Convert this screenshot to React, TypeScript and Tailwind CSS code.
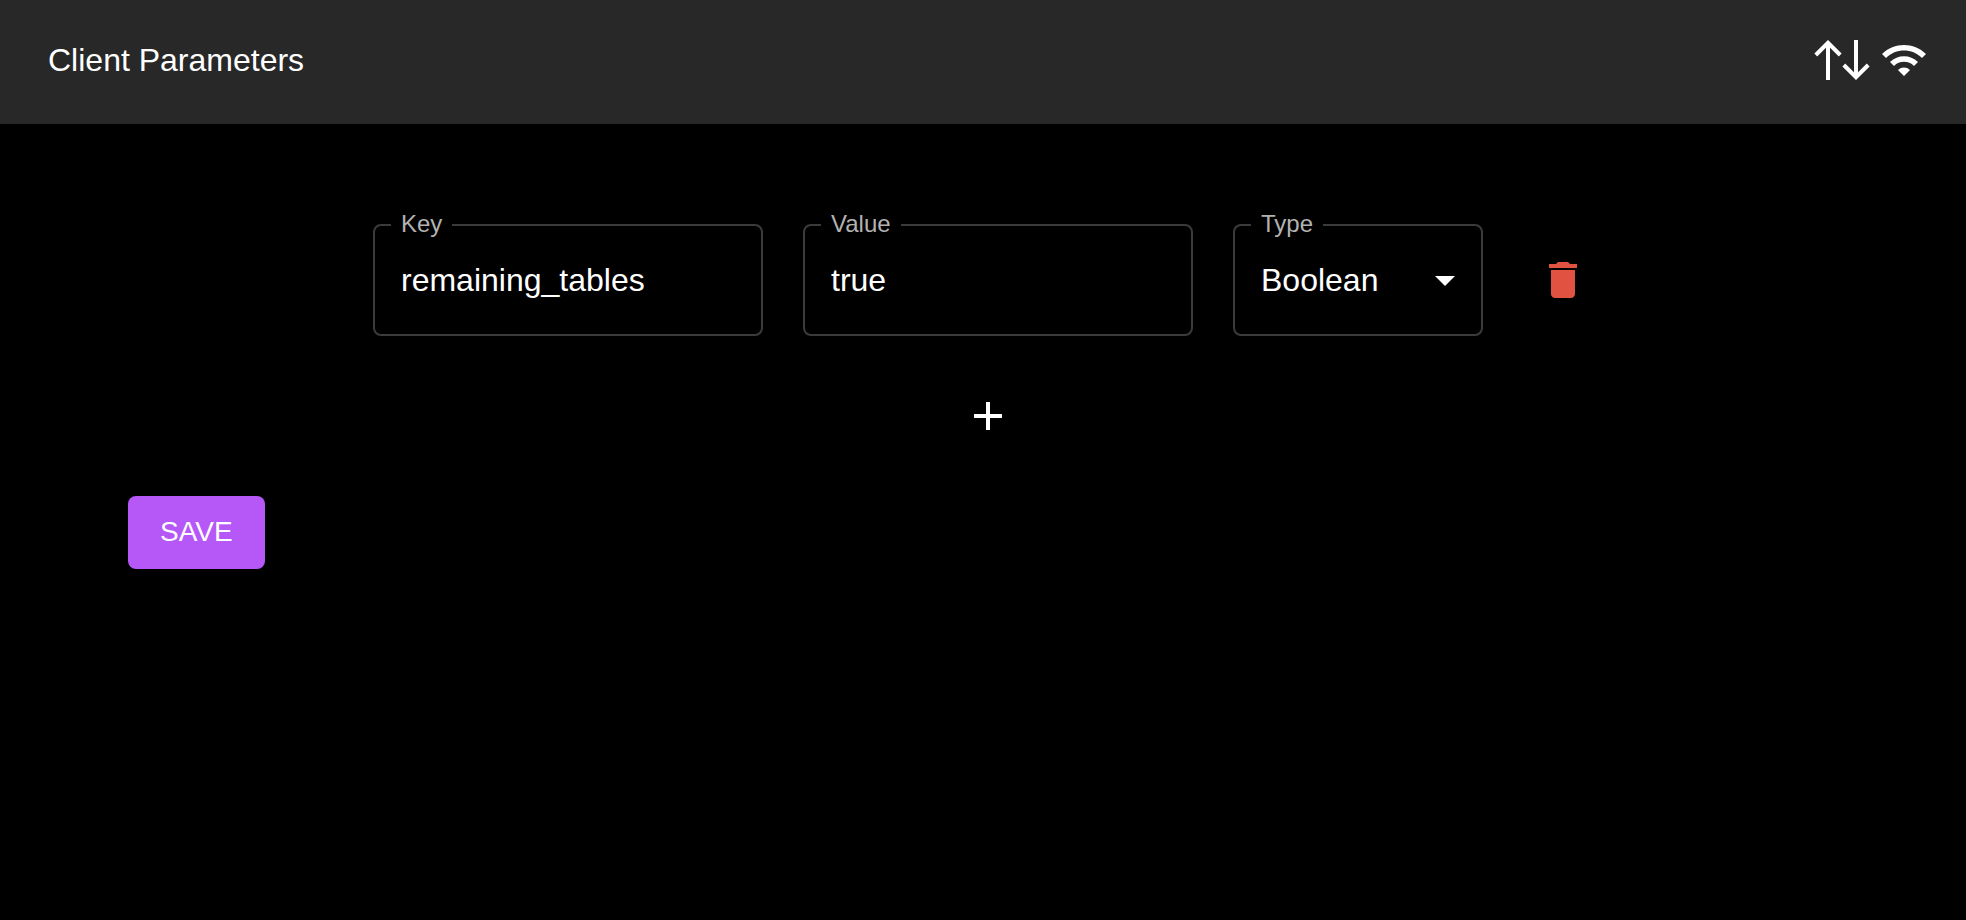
import { useId, useState } from 'react';
import type { ReactNode } from 'react';
import { MdAdd, MdArrowDropDown, MdDelete, MdWifi } from 'react-icons/md';

type ParamType = 'Boolean' | 'String' | 'Number';

interface Param {
  id: number;
  name: string;
  value: string;
  type: ParamType;
}

const TYPES: ParamType[] = ['Boolean', 'String', 'Number'];

function SyncArrows() {
  return (
    <svg viewBox="0 0 56 40" className="h-10 w-14" fill="none" stroke="currentColor" strokeWidth="4" aria-hidden="true">
      <path d="M14 40V2M1.8 15L14 2.8L26.2 15" />
      <path d="M42 0V38M29.8 25L42 37.2L54.2 25" />
    </svg>
  );
}

interface FieldProps {
  label: string;
  className: string;
  children: (id: string) => ReactNode;
}

function Field({ label, className, children }: FieldProps) {
  const id = useId();
  return (
    <div className={`relative h-28 rounded-lg border-2 border-[#3b3b3b] ${className}`}>
      <label htmlFor={id} className="absolute -top-4 left-4 bg-black px-2.5 text-2xl leading-7 text-[#b2b2b2]">
        {label}
      </label>
      {children(id)}
    </div>
  );
}

export default function App() {
  const [params, setParams] = useState<Param[]>([
    { id: 1, name: 'remaining_tables', value: 'true', type: 'Boolean' },
  ]);

  const update = (id: number, patch: Partial<Param>) =>
    setParams((list) => list.map((p) => (p.id === id ? { ...p, ...patch } : p)));
  const remove = (id: number) => setParams((list) => list.filter((p) => p.id !== id));
  const add = () => setParams((list) => [...list, { id: Date.now(), name: '', value: '', type: 'String' }]);

  return (
    <div className="min-h-screen bg-black font-['Liberation_Sans',Arial,sans-serif] text-white">
      <header className="flex h-31 items-center justify-between bg-[#282828] pr-[38px] pl-12">
        <h1 className="pb-1 text-[32px] leading-10">Client Parameters</h1>
        <div className="flex items-center gap-2.5 pb-1">
          <SyncArrows />
          <MdWifi className="size-12" aria-hidden="true" />
        </div>
      </header>

      <main className="pt-25 pr-[118px] pl-32">
        <div className="flex flex-col items-center gap-10">
          {params.map((p) => (
            <div key={p.id} className="flex items-center gap-10">
              <Field label="Key" className="w-[390px]">
                {(id) => (
                  <input
                    id={id}
                    value={p.name}
                    onChange={(e) => update(p.id, { name: e.target.value })}
                    className="h-full w-full bg-transparent px-6.5 text-[32px] outline-none"
                  />
                )}
              </Field>
              <Field label="Value" className="w-[390px]">
                {(id) => (
                  <input
                    id={id}
                    value={p.value}
                    onChange={(e) => update(p.id, { value: e.target.value })}
                    className="h-full w-full bg-transparent px-6.5 text-[32px] outline-none"
                  />
                )}
              </Field>
              <Field label="Type" className="w-[250px]">
                {(id) => (
                  <>
                    <select
                      id={id}
                      value={p.type}
                      onChange={(e) => update(p.id, { type: e.target.value as ParamType })}
                      className="h-full w-full appearance-none bg-transparent px-6.5 text-[32px] outline-none"
                    >
                      {TYPES.map((t) => (
                        <option key={t} className="bg-[#282828]">
                          {t}
                        </option>
                      ))}
                    </select>
                    <MdArrowDropDown className="pointer-events-none absolute top-7.5 right-3 size-12" />
                  </>
                )}
              </Field>
              <button
                type="button"
                aria-label="Delete parameter"
                onClick={() => remove(p.id)}
                className="rounded-full p-4 text-[#e25241]"
              >
                <MdDelete className="size-12" />
              </button>
            </div>
          ))}
          <button type="button" aria-label="Add parameter" onClick={add} className="rounded-full p-4">
            <MdAdd className="size-12" />
          </button>
        </div>
        <button type="button" className="mt-10 rounded-lg bg-[#b657f8] px-8 pt-3 pb-3.5 text-[28px] leading-[47px]">
          SAVE
        </button>
      </main>
    </div>
  );
}
